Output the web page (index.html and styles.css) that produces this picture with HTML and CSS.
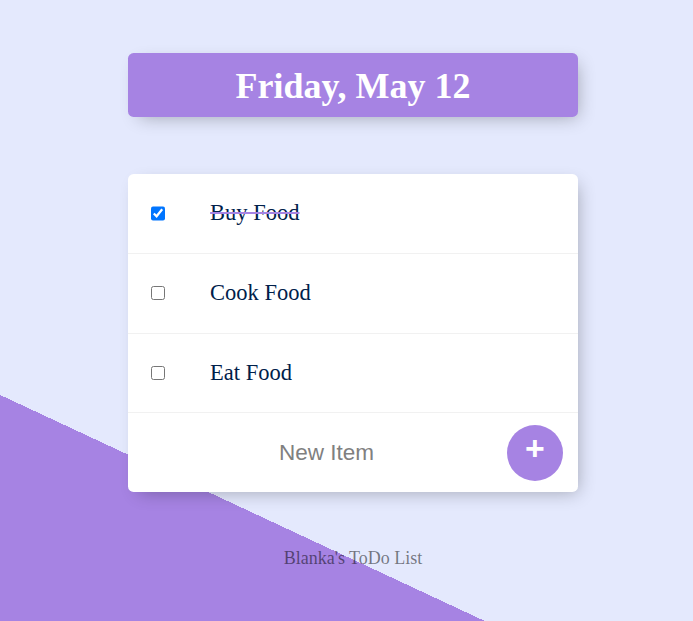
FILE: index.html
```html
<!DOCTYPE html>
<html lang="en">
<head>
<meta charset="utf-8">
<title>ToDo List</title>
<link rel="stylesheet" href="styles.css">
</head>
<body>
<main class="page">
  <div class="box heading">
    <h1 class="title">Friday, May 12</h1>
  </div>
  <div class="box list">
    <div class="item">
      <input class="check" type="checkbox" checked>
      <p class="label">Buy Food</p>
    </div>
    <div class="item">
      <input class="check" type="checkbox">
      <p class="label">Cook Food</p>
    </div>
    <div class="item">
      <input class="check" type="checkbox">
      <p class="label">Eat Food</p>
    </div>
    <form class="item new-item">
      <input class="new-text" type="text" name="newItem" placeholder="New Item" autocomplete="off">
      <button class="add" type="button">+</button>
    </form>
  </div>
  <footer class="footer">Blanka's ToDo List</footer>
</main>
</body>
</html>
```
FILE: styles.css
```css
html {
  background-color: #E4E9FD;
  background-image: linear-gradient(25deg, #A683E3 50%, #E4E9FD 50%);
  background-repeat: no-repeat;
  background-size: 693px 1113px;
}

body {
  margin: 0;
  font-family: "Liberation Serif", "Times New Roman", serif;
}

.page {
  padding-top: 53px;
  padding-left: 13px;
  display: flex;
  flex-direction: column;
  align-items: center;
}

.box {
  width: 450px;
  background: #fff;
  border-radius: 5.6px;
  box-shadow: 5.6px 5.6px 17px -5.6px rgba(0, 0, 0, 0.3);
}

.heading {
  background-color: #A683E3;
  text-align: center;
}

.title {
  margin: 0;
  padding: 12.5px 11.25px 10.5px;
  color: #fff;
  font-size: 36px;
  font-weight: bold;
  line-height: 41px;
}

.list {
  margin-top: 57px;
}

.item {
  min-height: 78.75px;
  display: flex;
  align-items: center;
  border-bottom: 1px solid #F1F1F1;
}

.item:last-child {
  border-bottom: 0;
}

.check {
  width: 14.6px;
  height: 14.6px;
  margin: 0 22.5px;
}

.label {
  margin: 0;
  padding: 22.5px;
  font-size: 22.5px;
  color: #00204a;
}

.check:checked + .label {
  text-decoration: line-through;
  text-decoration-color: #A683E3;
  text-decoration-thickness: 2px;
}

.new-item {
  margin: 0;
  padding-left: 22.5px;
  gap: 4.4px;
}

.new-text {
  width: 352px;
  height: 67.5px;
  padding: 0;
  border: none;
  background: transparent;
  text-align: center;
  font-family: "Liberation Sans", Arial, sans-serif;
  font-size: 22.5px;
}

.new-text::placeholder {
  color: grey;
  opacity: 1;
}

.add {
  width: 56px;
  height: 56px;
  border-radius: 50%;
  border: 0;
  padding: 0 0 6.75px;
  background-color: #A683E3;
  color: #fff;
  font-family: "Liberation Sans", Arial, sans-serif;
  font-size: 33.75px;
  font-weight: bold;
  line-height: 1;
}

.footer {
  margin-top: 56px;
  font-size: 18px;
  color: rgba(0, 0, 0, 0.5);
  text-align: center;
}
```
